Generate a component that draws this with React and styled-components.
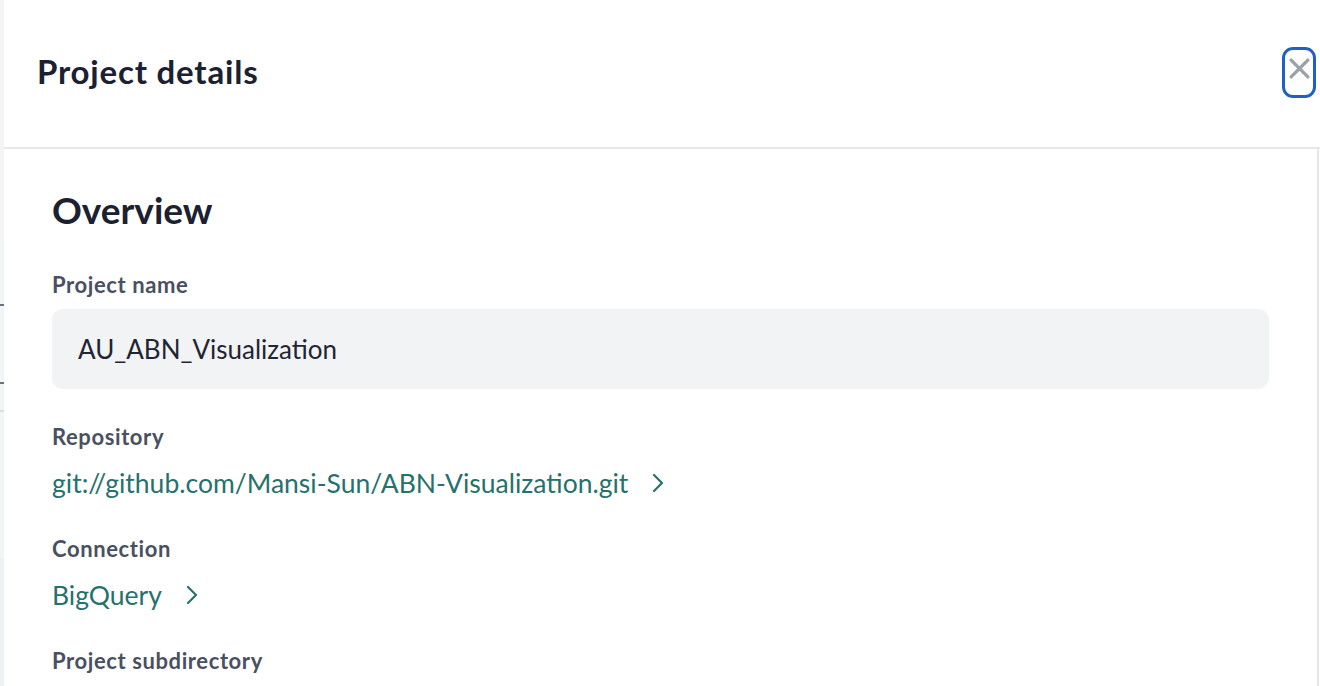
import React from "react";
import styled, { createGlobalStyle } from "styled-components";

const GlobalStyle = createGlobalStyle`
  html, body {
    margin: 0;
    padding: 0;
    background: #ffffff;
  }
  body {
    font-family: "Source Sans Pro", Lato, "Noto Sans", sans-serif;
    overflow: hidden;
  }
`;

const Page = styled.div`
  display: flex;
  height: 686px;
  width: 1320px;
  overflow: hidden;
`;

const BackStrip = styled.div`
  width: 4px;
  flex-shrink: 0;
  display: flex;
  flex-direction: column;
  background: #f3f4f6;
`;

const StripRow = styled.div`
  height: ${(p) => p.h}px;
  flex-shrink: 0;
  background: ${(p) => p.bg || "#f3f4f6"};
  border-bottom: ${(p) => (p.line ? `2px solid ${p.line}` : "none")};
`;

const Panel = styled.div`
  flex: 1;
  display: flex;
  flex-direction: column;
  background: #ffffff;
  min-height: 0;
`;

const Header = styled.header`
  height: 147px;
  flex-shrink: 0;
  display: flex;
  align-items: center;
  justify-content: space-between;
  padding-left: 33px;
  padding-right: 4px;
  border-bottom: 2px solid #e5e7eb;
`;

const Title = styled.h1`
  margin: 0 0 6px;
  font-size: 33px;
  font-weight: 700;
  color: #1b2130;
  letter-spacing: 0.8px;
`;

const CloseButton = styled.button`
  width: 34px;
  height: 51px;
  margin-top: -2px;
  border: 3px solid #1f5fc8;
  border-radius: 11px;
  background: #ffffff;
  display: flex;
  align-items: flex-start;
  justify-content: center;
  padding: 7px 0 0;
  cursor: pointer;
  box-sizing: border-box;
`;

const Content = styled.section`
  flex: 1;
  min-height: 0;
  overflow: hidden;
  margin-right: 1px;
  border-right: 2px solid #e5e7eb;
  padding: 38px 48px 0 48px;
`;

const SectionTitle = styled.h2`
  margin: 0 0 38px;
  font-size: 37px;
  font-weight: 700;
  color: #1b2130;
  line-height: 46px;
`;

const Field = styled.div`
  display: flex;
  flex-direction: column;
  margin-bottom: ${(p) => p.space || 35}px;
`;

const Label = styled.div`
  font-size: 22px;
  font-weight: 700;
  color: #4a5061;
  line-height: 28px;
  letter-spacing: 0.6px;
  margin-bottom: ${(p) => p.gap || 15}px;
`;

const ValueBox = styled.div`
  height: 80px;
  border-radius: 11px;
  background: #f2f3f5;
  display: flex;
  align-items: center;
  padding: 0 26px;
  font-size: 26px;
  color: #1f2533;
`;

const LinkRow = styled.a`
  display: inline-flex;
  align-items: center;
  gap: 24px;
  font-size: 26.5px;
  line-height: 34px;
  color: #25716d;
  text-decoration: none;
  width: fit-content;
`;

const Chevron = () => (
  <svg width="12" height="20" viewBox="0 0 12 20" fill="none">
    <path d="M2 2l8 8-8 8" stroke="#2a6f6c" strokeWidth="2.2" strokeLinecap="round" strokeLinejoin="round" />
  </svg>
);

const CloseIcon = () => (
  <svg width="23" height="23" viewBox="0 0 22 22" fill="none">
    <path d="M3 3l16 16M19 3L3 19" stroke="#9ca0a8" strokeWidth="3.2" strokeLinecap="round" />
  </svg>
);

export default function App() {
  return (
    <Page>
      <GlobalStyle />
      <BackStrip>
        <StripRow h={232} bg="#f4f4f5" />
        <StripRow h={72} line="#6b7280" />
        <StripRow h={76} line="#6b7280" />
        <StripRow h={26} line="#dddfe3" />
        <StripRow h={146} />
        <StripRow h={134} bg="#eef0f3" />
      </BackStrip>
      <Panel>
        <Header>
          <Title>Project details</Title>
          <CloseButton aria-label="Close">
            <CloseIcon />
          </CloseButton>
        </Header>
        <Content>
          <SectionTitle>Overview</SectionTitle>
          <Field space={34}>
            <Label gap={10}>Project name</Label>
            <ValueBox>AU_ABN_Visualization</ValueBox>
          </Field>
          <Field>
            <Label>Repository</Label>
            <LinkRow href="#">
              git://github.com/Mansi-Sun/ABN-Visualization.git
              <Chevron />
            </LinkRow>
          </Field>
          <Field>
            <Label>Connection</Label>
            <LinkRow href="#">
              BigQuery
              <Chevron />
            </LinkRow>
          </Field>
          <Field>
            <Label>Project subdirectory</Label>
          </Field>
        </Content>
      </Panel>
    </Page>
  );
}
